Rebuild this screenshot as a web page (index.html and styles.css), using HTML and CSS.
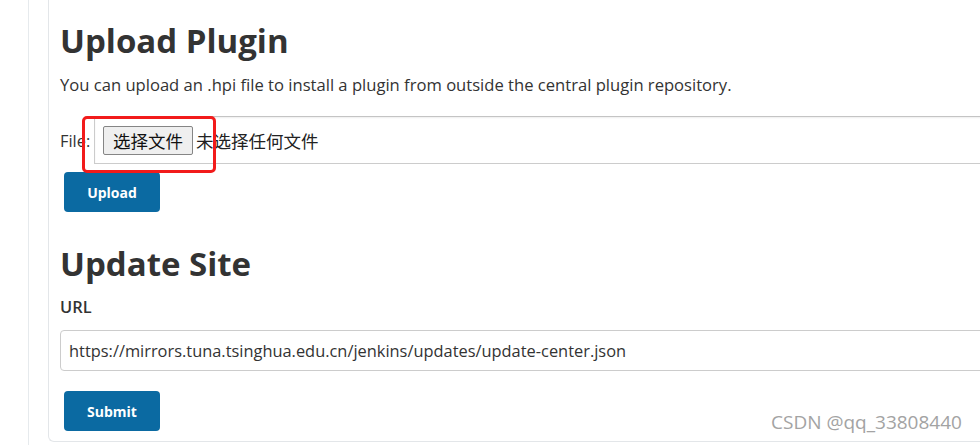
FILE: index.html
```html
<!DOCTYPE html>
<html lang="en">
<head>
<meta charset="utf-8">
<title>Plugins - Advanced</title>
<link rel="stylesheet" href="styles.css">
</head>
<body>
<div class="page">
  <div class="rail"></div>
  <main class="card">
    <section class="section upload">
      <h1 class="title">Upload Plugin</h1>
      <p class="desc">You can upload an .hpi file to install a plugin from outside the central plugin repository.</p>
      <div class="file-row">
        <span class="file-label">File:</span>
        <div class="file-box">
          <span class="file-btn">选择文件</span>
          <span class="file-none">未选择任何文件</span>
        </div>
      </div>
      <button class="btn" type="button">Upload</button>
    </section>
    <section class="section site">
      <h1 class="title">Update Site</h1>
      <div class="field-label">URL</div>
      <div class="url-input">https://mirrors.tuna.tsinghua.edu.cn/jenkins/updates/update-center.json</div>
      <button class="btn" type="button">Submit</button>
    </section>
  </main>
  <div class="watermark">CSDN @qq_33808440</div>
  <div class="annot"></div>
</div>
</body>
</html>
```
FILE: styles.css
```css
html, body {
  margin: 0;
  padding: 0;
  background: #ffffff;
  overflow: hidden;
}
body {
  font-family: "Open Sans", "Noto Sans CJK SC", sans-serif;
  color: #333333;
  width: 980px;
  height: 445px;
}
.page {
  position: relative;
  display: flex;
  height: 445px;
  overflow: hidden;
}
.rail {
  flex: 0 0 28px;
  border-right: 1px solid #e6eaed;
  height: 445px;
}
.card {
  margin-left: 19px;
  flex: 0 0 1000px;
  height: 442px;
  box-sizing: border-box;
  border-left: 1px solid #e3e6e9;
  border-bottom: 1px solid #e3e6e9;
  border-bottom-left-radius: 6px;
  padding: 21px 0 0 11px;
}
.title {
  margin: 0;
  font-size: 33px;
  line-height: 40px;
  font-weight: 700;
  color: #333333;
}
.desc {
  margin: 12px 0 0 0;
  font-size: 16.6px;
  line-height: 24px;
}
.file-row {
  display: flex;
  align-items: center;
  margin-top: 19px;
}
.file-label {
  font-size: 16.4px;
  width: 34px;
}
.file-box {
  flex: 1;
  display: flex;
  align-items: center;
  height: 46px;
  border: 1px solid #cccccc;
  border-top-color: #c4c4c4;
  box-shadow: inset 0 1px 2px rgba(0,0,0,0.07);
  padding-left: 8px;
}
.file-btn {
  font-family: "Noto Sans CJK SC", sans-serif;
  font-size: 17.5px;
  line-height: 27px;
  padding: 0 9px;
  background: #efefef;
  border: 1px solid #858585;
  border-radius: 2px;
  color: #111;
}
.file-none {
  font-family: "Noto Sans CJK SC", sans-serif;
  font-size: 17.5px;
  margin-left: 3px;
  color: #222;
}
.btn {
  display: block;
  margin: 8px 0 0 4px;
  width: 96px;
  height: 40px;
  border: none;
  border-radius: 4px;
  background: #0b6aa2;
  color: #ffffff;
  font-family: "Open Sans", sans-serif;
  font-weight: 700;
  font-size: 14px;
}
.site {
  margin-top: 32px;
}
.field-label {
  margin-top: 11px;
  font-size: 16.4px;
  font-weight: 600;
  line-height: 24px;
}
.url-input {
  margin-top: 11px;
  height: 41px;
  box-sizing: border-box;
  border: 1px solid #cccccc;
  border-radius: 4px;
  padding-left: 8px;
  display: flex;
  align-items: center;
  font-size: 16.4px;
  color: #333333;
}
.site .btn {
  margin-top: 20px;
}
.watermark {
  position: absolute;
  left: 771px;
  top: 409px;
  font-size: 19px;
  color: #a3a3a3;
  font-family: "Open Sans", sans-serif;
}
.annot {
  position: absolute;
  left: 82px;
  top: 116px;
  width: 128px;
  height: 51px;
  border: 3px solid #f21b1b;
  border-radius: 5px;
}
```
